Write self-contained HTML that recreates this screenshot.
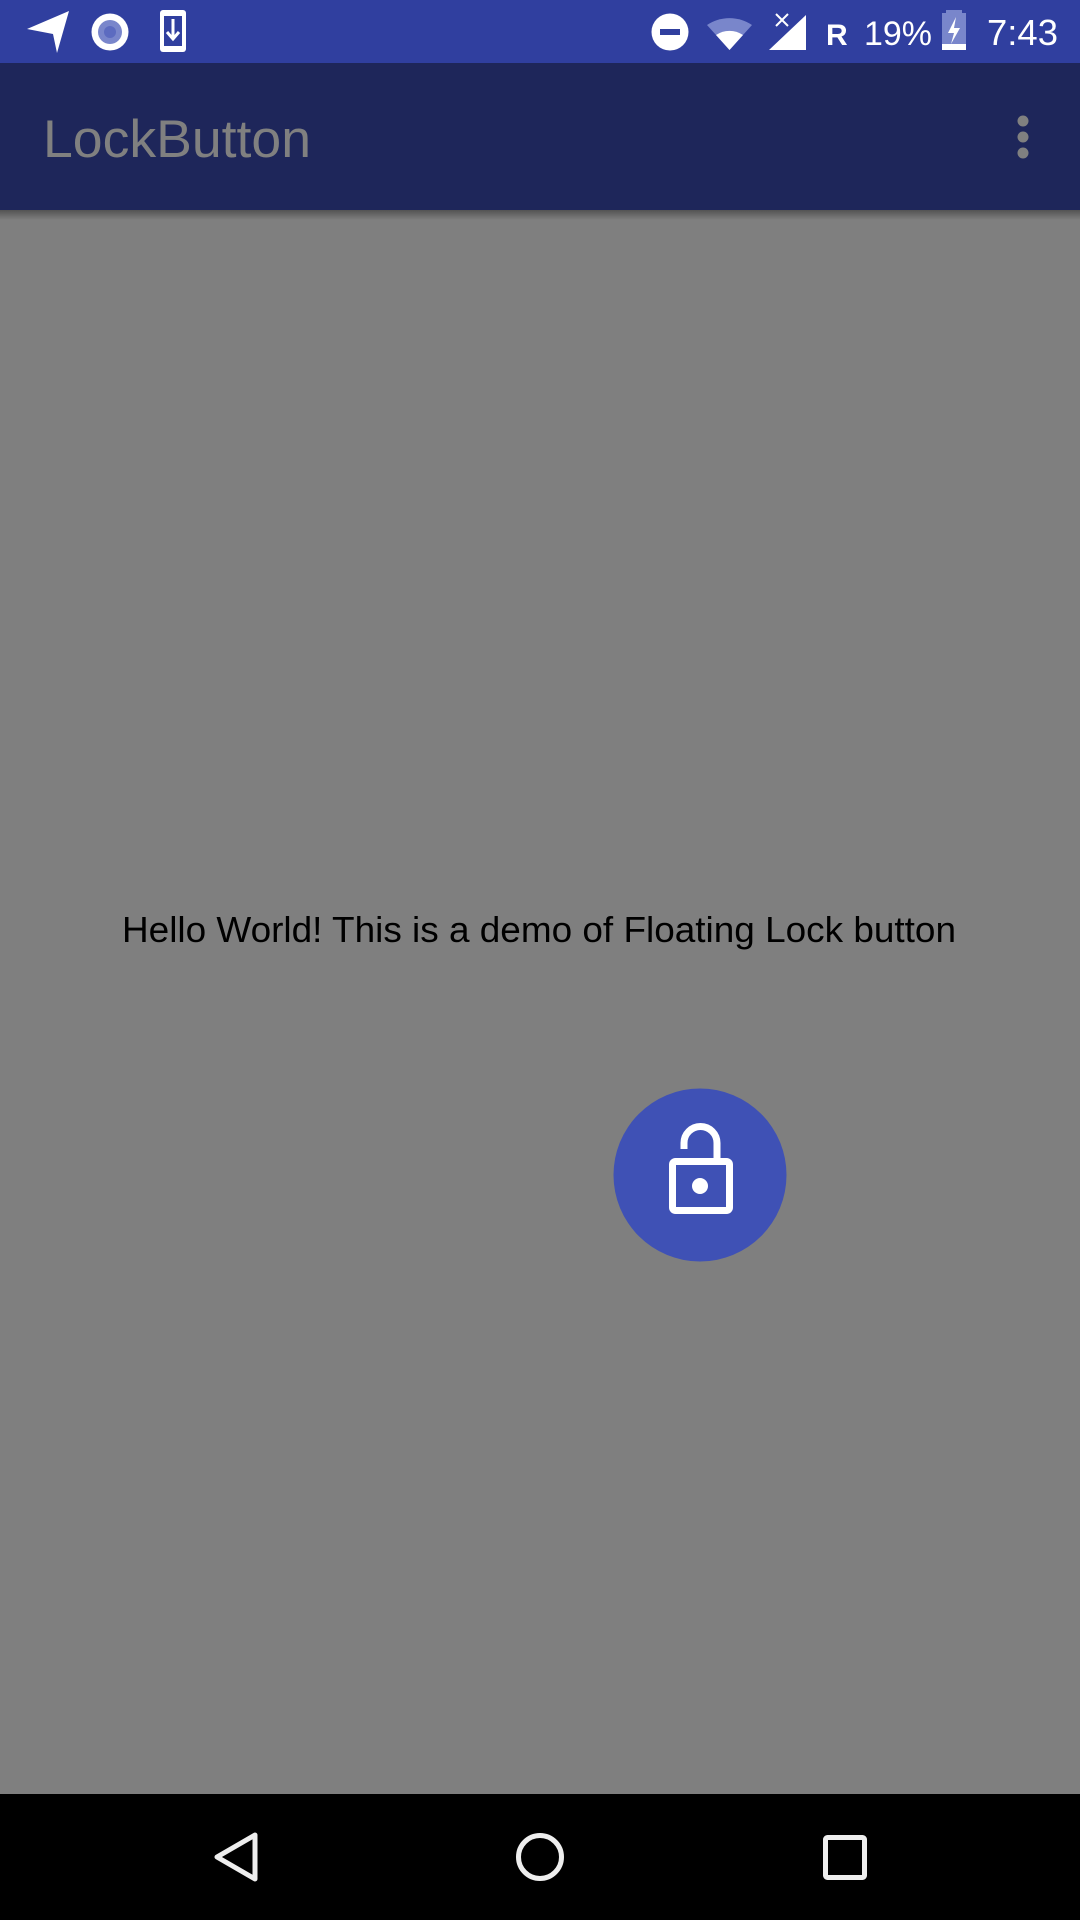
<!DOCTYPE html>
<html><head><meta charset="utf-8"><style>
html,body{margin:0;padding:0;width:1080px;height:1920px;overflow:hidden;background:#7f7f7f}
svg{display:block}
</style></head><body>
<svg width="1080" height="1920" viewBox="0 0 1080 1920" xmlns="http://www.w3.org/2000/svg" font-family="Liberation Sans, sans-serif">
<defs><linearGradient id="sh" x1="0" y1="0" x2="0" y2="1"><stop offset="0" stop-color="#000" stop-opacity="0.35"/><stop offset="1" stop-color="#000" stop-opacity="0"/></linearGradient></defs>
<rect x="0" y="0" width="1080" height="1920" fill="#7f7f7f"/>
<!-- status bar -->
<rect x="0" y="0" width="1080" height="63" fill="#303f9f"/>
<!-- location arrow -->
<path d="M27 29 L69 11 L57 53 L53 34 Z" fill="#fff"/>
<!-- circle icon -->
<circle cx="110" cy="32" r="18.5" fill="#fff"/>
<circle cx="110" cy="32" r="12" fill="#7986cb"/>
<circle cx="110" cy="32" r="6" fill="#5c6bc0"/>
<!-- phone download -->
<rect x="160" y="10" width="26" height="42" rx="3" fill="#fff"/>
<rect x="164" y="16" width="18" height="30" fill="#303f9f"/>
<path d="M173 19 V37 M167 32 L173 39 L179 32" stroke="#fff" stroke-width="3" fill="none"/>
<!-- dnd -->
<circle cx="670" cy="32" r="18.5" fill="#fff"/>
<rect x="660" y="29" width="20" height="6" fill="#303f9f"/>
<!-- wifi -->
<path d="M707 25 A40 40 0 0 1 752 25 L729.5 50 Z" fill="#7986cb"/>
<path d="M716 35 A24 24 0 0 1 743 35 L729.5 50 Z" fill="#fff"/>
<!-- signal -->
<path d="M769 50 L806 15 L806 50 Z" fill="#fff"/>
<path d="M776 14 L788 26 M788 14 L776 26" stroke="#fff" stroke-width="2"/>
<text x="826" y="45" font-size="30" font-weight="bold" fill="#fff">R</text>
<text x="864" y="45" font-size="34" fill="#fff" textLength="68" lengthAdjust="spacingAndGlyphs">19%</text>
<!-- battery -->
<rect x="946" y="10" width="16" height="4" fill="#7986cb"/>
<rect x="942" y="13" width="24" height="37" fill="#7986cb"/>
<rect x="942" y="44" width="24" height="6" fill="#fff"/>
<path d="M956 17 L948 33 L954 33 L951 44 L960 28 L954 28 Z" fill="#fff"/>
<text x="987" y="45" font-size="36" fill="#fff" textLength="71" lengthAdjust="spacingAndGlyphs">7:43</text>
<!-- toolbar -->
<rect x="0" y="63" width="1080" height="147" fill="#1e265a"/>
<rect x="0" y="210" width="1080" height="10" fill="url(#sh)"/>
<text x="43" y="157" font-size="53" fill="#808080" textLength="268" lengthAdjust="spacingAndGlyphs">LockButton</text>
<circle cx="1023" cy="121" r="5.5" fill="#808080"/>
<circle cx="1023" cy="137" r="5.5" fill="#808080"/>
<circle cx="1023" cy="153" r="5.5" fill="#808080"/>
<!-- body text -->
<text x="122" y="942" font-size="36" fill="#000" textLength="834" lengthAdjust="spacingAndGlyphs">Hello World! This is a demo of Floating Lock button</text>
<!-- FAB -->
<circle cx="700" cy="1175" r="86.5" fill="#3f51b5"/>
<path d="M684 1149 V1143 A16.5 16.5 0 0 1 717 1143 V1162" stroke="#fff" stroke-width="7" fill="none"/>
<rect x="672.5" y="1161.5" width="57" height="49" rx="3" stroke="#fff" stroke-width="7" fill="none"/>
<circle cx="700" cy="1186" r="8" fill="#fff"/>
<!-- nav bar -->
<rect x="0" y="1794" width="1080" height="126" fill="#000"/>
<path d="M255 1835 V1879 L217 1857 Z" stroke="#eee" stroke-width="5" stroke-linejoin="round" fill="none"/>
<circle cx="540" cy="1857" r="21.5" stroke="#eee" stroke-width="5" fill="none"/>
<rect x="825.5" y="1837.5" width="39" height="40" rx="2" stroke="#eee" stroke-width="5" fill="none"/>
</svg>
</body></html>
